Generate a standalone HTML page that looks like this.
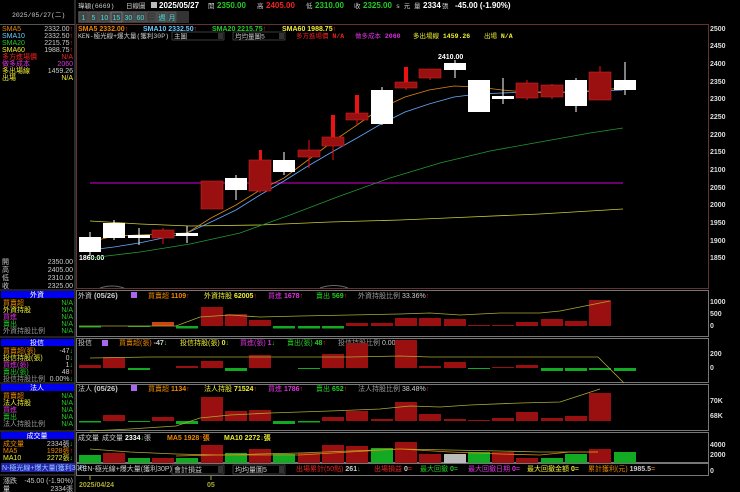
<!DOCTYPE html>
<html><head><meta charset="utf-8"><style>
html,body{margin:0;padding:0;background:#000;width:740px;height:492px;overflow:hidden}
svg{display:block}
text{font-family:"Liberation Sans","Noto Sans CJK TC",sans-serif;font-size:7px}
.b{font-weight:bold}
.m{font-family:"Liberation Mono","Noto Sans CJK TC",monospace;font-size:6.5px}
</style></head><body>
<svg width="740" height="492" viewBox="0 0 740 492" xmlns="http://www.w3.org/2000/svg">
<rect width="740" height="492" fill="#000"/>
<!-- header -->
<text x="12" y="17" fill="#ccc" class="m">2025/05/27(二)</text>
<line x1="75" y1="0" x2="75" y2="492" stroke="#555" stroke-width="1"/>
<line x1="0" y1="24.5" x2="75" y2="24.5" stroke="#555"/>
<text x="78" y="8" fill="#ccc" class="m">瑋穎(6669)</text>
<text x="126" y="8" fill="#ccc" class="m">日線圖</text>
<rect x="151" y="2" width="6" height="6" fill="#bbb"/>
<text x="159" y="8" fill="#fff" class="b" style="font-size:8px">2025/05/27</text>
<text x="208" y="8" fill="#ccc" class="m">開</text>
<text x="217" y="8" fill="#2c2" class="b" style="font-size:8px">2350.00</text>
<text x="257" y="8" fill="#ccc" class="m">高</text>
<text x="266" y="8" fill="#e22" class="b" style="font-size:8px">2405.00</text>
<text x="306" y="8" fill="#ccc" class="m">低</text>
<text x="315" y="8" fill="#2c2" class="b" style="font-size:8px">2310.00</text>
<text x="354" y="8" fill="#ccc" class="m">收</text>
<text x="363" y="8" fill="#2c2" class="b" style="font-size:8px">2325.00</text>
<text x="396" y="8" fill="#ccc" class="m">s 元</text>
<text x="414" y="8" fill="#ccc" class="m">量</text>
<text x="423" y="8" fill="#fff" class="b" style="font-size:8px">2334</text>
<text x="442" y="8" fill="#ccc" class="m">張</text>
<text x="455" y="8" fill="#fff" class="b" style="font-size:8px">-45.00 (-1.90%)</text>
<!-- buttons -->
<rect x="78" y="11" width="111" height="12" fill="#333"/>
<g fill="#444" stroke="#666" stroke-width="0.5">
<rect x="79" y="12" width="9" height="10"/><rect x="89" y="12" width="9" height="10"/><rect x="99" y="12" width="11" height="10"/><rect x="111" y="12" width="11" height="10" stroke="#aaa"/><rect x="123" y="12" width="11" height="10"/><rect x="135" y="12" width="11" height="10"/><rect x="147" y="12" width="9" height="10" fill="#3a3a3a"/><rect x="157" y="12" width="9" height="10"/><rect x="167" y="12" width="9" height="10"/>
</g>
<g fill="#4dd" class="m"><text x="81.5" y="20">1</text><text x="91.5" y="20">5</text><text x="100.5" y="20">10</text><text x="112.5" y="20">15</text><text x="124.5" y="20">30</text><text x="136.5" y="20">60</text><text x="148.5" y="20" fill="#555">日</text><text x="158.5" y="20">週</text><text x="168.5" y="20">月</text></g>
<!-- sidebar top -->
<g class="m">
<text x="2" y="31" fill="#e80">SMA5</text><text x="73" y="31" fill="#ccc" text-anchor="end">2332.00<tspan fill="#e22">↑</tspan></text>
<text x="2" y="38" fill="#6cf">SMA10</text><text x="73" y="38" fill="#ccc" text-anchor="end">2332.50<tspan fill="#e22">↑</tspan></text>
<text x="2" y="45" fill="#2c2">SMA20</text><text x="73" y="45" fill="#ccc" text-anchor="end">2215.75<tspan fill="#e22">↑</tspan></text>
<text x="2" y="52" fill="#ee3">SMA60</text><text x="73" y="52" fill="#ccc" text-anchor="end">1988.75<tspan fill="#e22">↑</tspan></text>
<text x="2" y="59" fill="#e22">多方進場價</text><text x="73" y="59" fill="#e22" text-anchor="end">N/A</text>
<text x="2" y="66" fill="#d3d">做多成本</text><text x="73" y="66" fill="#d3d" text-anchor="end">2060</text>
<text x="2" y="73" fill="#ee3">多出場線</text><text x="73" y="73" fill="#ccc" text-anchor="end">1459.26</text>
<text x="2" y="80" fill="#ee3">出場</text><text x="73" y="80" fill="#ee3" text-anchor="end">N/A</text>
<text x="2" y="264" fill="#ccc">開</text><text x="73" y="264" fill="#ccc" text-anchor="end">2350.00</text>
<text x="2" y="272" fill="#ccc">高</text><text x="73" y="272" fill="#ccc" text-anchor="end">2405.00</text>
<text x="2" y="280" fill="#ccc">低</text><text x="73" y="280" fill="#ccc" text-anchor="end">2310.00</text>
<text x="2" y="288" fill="#ccc">收</text><text x="73" y="288" fill="#ccc" text-anchor="end">2325.00</text>
</g>
<!-- sidebar sections -->
<g class="m">
<rect x="1" y="291" width="73" height="7" fill="#00e"/><text x="37" y="297" fill="#fff" text-anchor="middle">外資</text>
<text x="3" y="305" fill="#e80">買賣超</text><text x="73" y="305" fill="#2c2" text-anchor="end">N/A</text>
<text x="3" y="312" fill="#ee3">外資持股</text><text x="73" y="312" fill="#2c2" text-anchor="end">N/A</text>
<text x="3" y="319" fill="#d3d">買進</text><text x="73" y="319" fill="#2c2" text-anchor="end">N/A</text>
<text x="3" y="326" fill="#2c2">賣出</text><text x="73" y="326" fill="#2c2" text-anchor="end">N/A</text>
<text x="3" y="333" fill="#999">外資持股比例</text><text x="73" y="333" fill="#2c2" text-anchor="end">N/A</text>
<rect x="1" y="339" width="73" height="7" fill="#00e"/><text x="37" y="345" fill="#fff" text-anchor="middle">投信</text>
<text x="3" y="353" fill="#e80">買賣超(張)</text><text x="73" y="353" fill="#ccc" text-anchor="end">-47<tspan fill="#2c2">↓</tspan></text>
<text x="3" y="360" fill="#ee3">投信持股(張)</text><text x="73" y="360" fill="#ccc" text-anchor="end">0<tspan fill="#2c2">↓</tspan></text>
<text x="3" y="367" fill="#d3d">買進(張)</text><text x="73" y="367" fill="#ccc" text-anchor="end">1<tspan fill="#2c2">↓</tspan></text>
<text x="3" y="374" fill="#2c2">賣出(張)</text><text x="73" y="374" fill="#ccc" text-anchor="end">48<tspan fill="#e22">↑</tspan></text>
<text x="3" y="381" fill="#999">投信持股比例</text><text x="73" y="381" fill="#ccc" text-anchor="end">0.00%<tspan fill="#2c2">↓</tspan></text>
<rect x="1" y="384" width="73" height="7" fill="#00e"/><text x="37" y="390" fill="#fff" text-anchor="middle">法人</text>
<text x="3" y="398" fill="#e80">買賣超</text><text x="73" y="398" fill="#2c2" text-anchor="end">N/A</text>
<text x="3" y="405" fill="#ee3">法人持股</text><text x="73" y="405" fill="#2c2" text-anchor="end">N/A</text>
<text x="3" y="412" fill="#d3d">買進</text><text x="73" y="412" fill="#2c2" text-anchor="end">N/A</text>
<text x="3" y="419" fill="#2c2">賣出</text><text x="73" y="419" fill="#2c2" text-anchor="end">N/A</text>
<text x="3" y="426" fill="#999">法人持股比例</text><text x="73" y="426" fill="#2c2" text-anchor="end">N/A</text>
<rect x="1" y="432" width="73" height="7" fill="#00e"/><text x="37" y="438" fill="#fff" text-anchor="middle">成交量</text>
<text x="3" y="446" fill="#e80">成交量</text><text x="73" y="446" fill="#ccc" text-anchor="end">2334張<tspan fill="#2c2">↓</tspan></text>
<text x="3" y="453" fill="#e80">MA5</text><text x="73" y="453" fill="#e80" text-anchor="end">1928張<tspan fill="#e22">↑</tspan></text>
<text x="3" y="460" fill="#ee3">MA10</text><text x="73" y="460" fill="#ee3" text-anchor="end">2272張<tspan fill="#2c2">↓</tspan></text>
<rect x="1" y="463" width="74" height="9" fill="#22a"/><text x="2" y="470" fill="#9cf">N-極光線+爆大量(獲利30P)</text>
<text x="3" y="483" fill="#ccc">漲跌</text><text x="73" y="483" fill="#ccc" text-anchor="end">-45.00 (-1.90%)</text>
<text x="3" y="491" fill="#ccc">量</text><text x="73" y="491" fill="#ccc" text-anchor="end">2334張</text>
</g>
<g stroke="#444"><line x1="0" y1="290" x2="75" y2="290"/><line x1="0" y1="337" x2="75" y2="337"/><line x1="0" y1="383" x2="75" y2="383"/><line x1="0" y1="431" x2="75" y2="431"/><line x1="0" y1="475" x2="75" y2="475"/></g>

<!-- main chart frame -->
<rect x="76.5" y="24.5" width="632" height="264" fill="none" stroke="#633"/>
<g class="b">
<text x="78" y="31" fill="#e80">SMA5 2332.00<tspan fill="#e22">↑</tspan></text>
<text x="143" y="31" fill="#6cf">SMA10 2332.50<tspan fill="#e22">↑</tspan></text>
<text x="212" y="31" fill="#2c2">SMA20 2215.75<tspan fill="#e22">↑</tspan></text>
<text x="282" y="31" fill="#ee3">SMA60 1988.75<tspan fill="#e22">↑</tspan></text>
</g>
<text x="78" y="38" fill="#ccc" class="m">KEN-極光線+爆大量(獲利30P)</text>
<rect x="172" y="32" width="52" height="8" fill="#000" stroke="#777" stroke-width="0.5"/><text x="174" y="38.5" fill="#ccc" class="m">主圖</text><rect x="218" y="33" width="5" height="6" fill="#333"/>
<rect x="233" y="32" width="52" height="8" fill="#000" stroke="#777" stroke-width="0.5"/><text x="235" y="38.5" fill="#ccc" class="m">均均量圖5</text><rect x="279" y="33" width="5" height="6" fill="#333"/>
<text x="296" y="38" fill="#e22" class="m">多方進場價 <tspan class="b">N/A</tspan></text>
<text x="355" y="38" fill="#d3d" class="m">做多成本 <tspan class="b">2060</tspan></text>
<text x="413" y="38" fill="#ee3" class="m">多出場線 <tspan class="b">1459.26</tspan></text>
<text x="484" y="38" fill="#ee3" class="m">出場 <tspan class="b">N/A</tspan></text>
<!-- price axis -->
<g fill="#ddd" class="b" style="font-size:7px">
<text x="710" y="31">2500</text><text x="710" y="48">2450</text><text x="710" y="66">2400</text><text x="710" y="84">2350</text><text x="710" y="101">2300</text><text x="710" y="119">2250</text><text x="710" y="137">2200</text><text x="710" y="154">2150</text><text x="710" y="172">2100</text><text x="710" y="190">2050</text><text x="710" y="207">2000</text><text x="710" y="225">1950</text><text x="710" y="243">1900</text><text x="710" y="260">1850</text>
</g>
<text x="438" y="59" fill="#fff" class="b">2410.00</text>
<text x="79" y="260" fill="#fff" class="b">1860.00</text>
<!-- purple line -->
<line x1="90" y1="183" x2="623" y2="183" stroke="#a0a" stroke-width="1.2"/>
<!-- MAs -->
<polyline fill="none" stroke="#cc3" stroke-width="0.8" points="90,221 140,224 190,226 260,225 330,222 400,220 470,217 540,214 623,209"/>
<polyline fill="none" stroke="#293" stroke-width="0.8" points="90,258 140,252 190,244 240,233 290,215 340,196 390,178 440,163 490,151 540,142 590,133 623,128"/>
<polyline fill="none" stroke="#6af" stroke-width="0.8" points="90,250 114,247 139,243 163,238 187,233 211,222 236,210 260,195 284,181 308,166 332,152 357,138 381,124 405,112 429,104 454,97 478,94 502,93 526,92 550,92 574,92 599,91 623,90"/>
<polyline fill="none" stroke="#d81" stroke-width="0.8" points="90,242 114,236 139,235 163,234 187,233 211,218 236,205 260,190 284,178 308,160 332,142 357,125 381,108 405,97 429,90 454,86 478,87 502,90 526,92 550,93 574,92 599,90 623,88"/>
<!-- candles -->
<g stroke-width="1">
<!-- wicks -->
<g stroke="#fff">
<line x1="90" y1="232" x2="90" y2="256"/><line x1="114" y1="220" x2="114" y2="240"/><line x1="139" y1="228" x2="139" y2="245"/><line x1="187" y1="226" x2="187" y2="243"/><line x1="236" y1="175" x2="236" y2="200"/><line x1="284" y1="152" x2="284" y2="175"/><line x1="382" y1="87" x2="382" y2="125"/><line x1="455" y1="60" x2="455" y2="78"/><line x1="503" y1="78" x2="503" y2="104"/><line x1="576" y1="78" x2="576" y2="112"/><line x1="625" y1="62" x2="625" y2="95"/>
</g>
<g stroke="#e11">
<line x1="163" y1="228" x2="163" y2="244"/><line x1="212" y1="181" x2="212" y2="209"/><line x1="260" y1="150" x2="260" y2="193"/><line x1="309" y1="140" x2="309" y2="168"/><line x1="333" y1="115" x2="333" y2="160"/><line x1="357" y1="95" x2="357" y2="125"/><line x1="406" y1="67" x2="406" y2="90"/><line x1="430" y1="69" x2="430" y2="80"/><line x1="527" y1="80" x2="527" y2="100"/><line x1="552" y1="84" x2="552" y2="99"/><line x1="600" y1="66" x2="600" y2="100"/>
</g>
</g>
<g fill="#fff">
<rect x="79" y="237" width="22" height="15"/><rect x="103" y="223" width="22" height="15"/><rect x="128" y="235" width="22" height="3"/><rect x="176" y="233" width="22" height="3"/><rect x="225" y="178" width="22" height="12"/><rect x="273" y="160" width="22" height="12"/><rect x="371" y="90" width="22" height="34"/><rect x="444" y="63" width="22" height="7"/><rect x="468" y="80" width="22" height="32"/><rect x="492" y="96" width="22" height="3"/><rect x="565" y="80" width="22" height="26"/><rect x="614" y="80" width="22" height="10"/>
</g>
<g fill="#9a1010" stroke="#c22" stroke-width="0.6">
<rect x="152" y="230" width="22" height="8"/><rect x="201" y="181" width="22" height="28"/><rect x="249" y="160" width="22" height="31"/><rect x="298" y="150" width="22" height="7"/><rect x="322" y="137" width="22" height="9"/><rect x="346" y="113" width="22" height="7"/><rect x="395" y="82" width="22" height="6"/><rect x="419" y="69" width="22" height="9"/><rect x="516" y="83" width="22" height="15"/><rect x="541" y="85" width="22" height="12"/><rect x="589" y="72" width="22" height="28"/>
</g>
<g fill="#e11"><rect x="331" y="115" width="4" height="22"/><rect x="259" y="150" width="3" height="10"/><rect x="355" y="95" width="4" height="18"/><rect x="404" y="67" width="4" height="15"/></g>
<!-- small bottom bumps -->
<path d="M100,288 q12,-4 24,0 M320,288 q14,-5 28,0" stroke="#666" fill="none"/>

<!-- sub panels frames -->
<g fill="none" stroke="#777">
<rect x="76.5" y="290.5" width="632" height="46"/>
<rect x="76.5" y="338.5" width="632" height="44"/>
<rect x="76.5" y="384.5" width="632" height="46"/>
<rect x="76.5" y="432.5" width="632" height="30"/>
<rect x="76.5" y="463.5" width="632" height="12"/>
</g>
<!-- panel 1 -->
<g class="m">
<text x="78" y="298" fill="#ccc">外資 <tspan class="b" style="font-size:7.5px">(05/26)</tspan></text>
<rect x="131" y="292" width="6" height="6" fill="#a6e"/>
<text x="148" y="298" fill="#e80">買賣超 <tspan class="b">1109</tspan><tspan fill="#e22">↑</tspan></text>
<text x="204" y="298" fill="#ee3">外資持股 <tspan class="b">62005</tspan><tspan fill="#e22">↑</tspan></text>
<text x="268" y="298" fill="#d3d">買進 <tspan class="b">1678</tspan><tspan fill="#e22">↑</tspan></text>
<text x="316" y="298" fill="#2c2">賣出 <tspan class="b">569</tspan><tspan fill="#e22">↑</tspan></text>
<text x="358" y="298" fill="#999">外資持股比例 <tspan fill="#ccc">33.36%</tspan><tspan fill="#e22">↑</tspan></text>
</g>
<g fill="#9a1010">
<rect x="152" y="322" width="22" height="4" fill="#c41"/><rect x="201" y="307" width="22" height="19"/><rect x="225" y="314" width="22" height="12"/><rect x="249" y="320" width="22" height="6"/><rect x="346" y="323" width="22" height="3"/><rect x="371" y="323" width="22" height="3"/><rect x="395" y="318" width="22" height="8"/><rect x="419" y="318" width="22" height="8"/><rect x="444" y="319" width="22" height="7"/><rect x="468" y="325" width="22" height="1"/><rect x="492" y="325" width="22" height="1"/><rect x="516" y="322" width="22" height="4"/><rect x="541" y="319" width="22" height="7"/><rect x="565" y="321" width="22" height="5"/><rect x="589" y="300" width="22" height="26"/>
</g>
<g fill="#1a2"><rect x="79" y="326" width="22" height="1.5"/><rect x="176" y="326" width="22" height="2.5"/><rect x="273" y="326" width="22" height="2.5"/><rect x="298" y="326" width="22" height="2.5"/><rect x="322" y="326" width="22" height="2.5"/><rect x="128" y="326" width="22" height="1"/></g>
<polyline fill="none" stroke="#aa3" stroke-width="0.8" points="79,326 150,326 176,326 200,317 230,315 260,317 300,316 350,315 400,314 430,313 460,315 500,313 540,313 560,311 590,305 610,301"/>
<g fill="#ddd" class="b"><text x="710" y="304">1000</text><text x="710" y="316">500</text><text x="710" y="328">0</text></g>
<!-- panel 2 -->
<g class="m">
<text x="78" y="345" fill="#ccc">投信</text>
<rect x="102" y="340" width="6" height="6" fill="#a6e"/>
<text x="119" y="345" fill="#e80">買賣超(張) <tspan class="b" fill="#ccc">-47</tspan><tspan fill="#2c2">↓</tspan></text>
<text x="180" y="345" fill="#ee3">投信持股(張) <tspan class="b">0</tspan><tspan fill="#2c2">↓</tspan></text>
<text x="240" y="345" fill="#d3d">買進(張) <tspan class="b">1</tspan><tspan fill="#2c2">↓</tspan></text>
<text x="287" y="345" fill="#2c2">賣出(張) <tspan class="b">48</tspan><tspan fill="#e22">↑</tspan></text>
<text x="338" y="345" fill="#999">投信持股比例 <tspan fill="#ccc">0.00%</tspan><tspan fill="#2c2">↓</tspan></text>
</g>
<g fill="#9a1010">
<rect x="79" y="365" width="22" height="3"/><rect x="103" y="357" width="22" height="11"/><rect x="176" y="366" width="22" height="2"/><rect x="201" y="361" width="22" height="7"/><rect x="249" y="355" width="22" height="13"/><rect x="322" y="354" width="22" height="14"/><rect x="346" y="343" width="22" height="25"/><rect x="395" y="340" width="22" height="28"/><rect x="419" y="366" width="22" height="2"/><rect x="444" y="362" width="22" height="6"/><rect x="492" y="367" width="22" height="1"/><rect x="516" y="365" width="22" height="3"/>
</g>
<g fill="#1a2"><rect x="128" y="368" width="22" height="2"/><rect x="225" y="368" width="22" height="3"/><rect x="298" y="368" width="22" height="1"/><rect x="541" y="368" width="22" height="3"/><rect x="565" y="368" width="22" height="3"/><rect x="589" y="368" width="22" height="2"/><rect x="614" y="368" width="22" height="3"/><rect x="468" y="368" width="22" height="1"/></g>
<polyline fill="none" stroke="#aa3" stroke-width="0.8" points="90,358 150,357 250,357 350,357 400,356 430,357 560,357 598,357 624,383"/>
<g fill="#ddd" class="b"><text x="710" y="356">200</text><text x="710" y="370">0</text></g>
<!-- panel 3 -->
<g class="m">
<text x="78" y="391" fill="#ccc">法人 <tspan class="b" style="font-size:7.5px">(05/26)</tspan></text>
<rect x="131" y="385" width="6" height="6" fill="#a6e"/>
<text x="148" y="391" fill="#e80">買賣超 <tspan class="b">1134</tspan><tspan fill="#e22">↑</tspan></text>
<text x="204" y="391" fill="#ee3">法人持股 <tspan class="b">71524</tspan><tspan fill="#e22">↑</tspan></text>
<text x="268" y="391" fill="#d3d">買進 <tspan class="b">1786</tspan><tspan fill="#e22">↑</tspan></text>
<text x="316" y="391" fill="#2c2">賣出 <tspan class="b">652</tspan><tspan fill="#e22">↑</tspan></text>
<text x="358" y="391" fill="#999">法人持股比例 <tspan fill="#ccc">38.48%</tspan><tspan fill="#e22">↑</tspan></text>
</g>
<g fill="#9a1010">
<rect x="103" y="415" width="22" height="6"/><rect x="152" y="417" width="22" height="4"/><rect x="201" y="397" width="22" height="24"/><rect x="225" y="411" width="22" height="10"/><rect x="249" y="410" width="22" height="11"/><rect x="322" y="417" width="22" height="4"/><rect x="346" y="411" width="22" height="10"/><rect x="371" y="419" width="22" height="2"/><rect x="395" y="402" width="22" height="19"/><rect x="419" y="414" width="22" height="7"/><rect x="444" y="419" width="22" height="2"/><rect x="468" y="420" width="22" height="1"/><rect x="492" y="418" width="22" height="3"/><rect x="516" y="412" width="22" height="9"/><rect x="541" y="418" width="22" height="3"/><rect x="565" y="416" width="22" height="5"/><rect x="589" y="393" width="22" height="28"/>
</g>
<g fill="#1a2"><rect x="79" y="421" width="22" height="1.5"/><rect x="128" y="421" width="22" height="1"/><rect x="176" y="421" width="22" height="3"/><rect x="273" y="421" width="22" height="3"/><rect x="298" y="421" width="22" height="1.5"/></g>
<polyline fill="none" stroke="#aa3" stroke-width="0.8" points="90,431 130,429 176,426 200,418 230,415 270,413 330,411 380,409 410,406 440,407 470,405 520,403 560,402 600,389"/>
<g fill="#ddd" class="b"><text x="710" y="403">70K</text><text x="710" y="418">68K</text></g>
<!-- volume -->
<g class="m">
<text x="78" y="440" fill="#ccc">成交量</text>
<text x="102" y="440" fill="#ccc">成交量 <tspan class="b" fill="#fff">2334</tspan><tspan fill="#2c2">↓</tspan>張</text>
<text x="167" y="440" fill="#e80" class="b">MA5 1928<tspan fill="#e22">↑</tspan>張</text>
<text x="224" y="440" fill="#ee3" class="b">MA10 2272<tspan fill="#2c2">↓</tspan>張</text>
</g>
<g fill="#9a1010">
<rect x="103" y="453" width="22" height="10"/><rect x="152" y="458" width="22" height="5"/><rect x="201" y="445" width="22" height="18"/><rect x="249" y="449" width="22" height="14"/><rect x="298" y="453" width="22" height="10"/><rect x="322" y="445" width="22" height="18"/><rect x="346" y="446" width="22" height="17"/><rect x="395" y="442" width="22" height="21"/><rect x="419" y="454" width="22" height="9"/><rect x="492" y="452" width="22" height="11"/><rect x="516" y="458" width="22" height="5"/><rect x="589" y="449" width="22" height="14"/>
</g>
<g fill="#1a2"><rect x="79" y="455" width="22" height="8"/><rect x="128" y="458" width="22" height="5"/><rect x="176" y="458" width="22" height="5"/><rect x="225" y="453" width="22" height="10"/><rect x="273" y="454" width="22" height="9"/><rect x="371" y="448" width="22" height="15"/><rect x="468" y="452" width="22" height="11"/><rect x="541" y="458" width="22" height="5"/><rect x="565" y="454" width="22" height="9"/><rect x="614" y="452" width="22" height="11"/></g>
<rect x="444" y="454" width="22" height="9" fill="#bbb"/>
<polyline fill="none" stroke="#aa3" stroke-width="0.8" points="90,449 130,452 176,454 220,455 300,453 350,451 400,449 450,450 500,451 540,452 570,452 598,452"/>
<polyline fill="none" stroke="#d81" stroke-width="0.8" points="176,456 220,455 300,455 350,452 400,449 450,452 500,454 540,455 570,452 598,452"/>
<g fill="#ddd" class="b"><text x="710" y="447">4000</text><text x="710" y="457">2000</text><text x="710" y="473">0</text></g>
<!-- bottom bar -->
<g class="m">
<text x="78" y="471" fill="#ccc">KEN-極光線+爆大量(獲利30P)</text>
<rect x="172" y="465" width="52" height="9" fill="#000" stroke="#777" stroke-width="0.5"/><text x="174" y="472" fill="#ccc">會計損益</text><rect x="218" y="466" width="5" height="7" fill="#333"/>
<rect x="233" y="465" width="52" height="9" fill="#000" stroke="#777" stroke-width="0.5"/><text x="235" y="472" fill="#ccc">均均量圖5</text><rect x="279" y="466" width="5" height="7" fill="#333"/>
<text x="296" y="471" fill="#e22">出場累計(50點) <tspan class="b" fill="#ccc">261</tspan><tspan fill="#2c2">↓</tspan></text>
<text x="374" y="471" fill="#e22">出場損益 <tspan class="b" fill="#ccc">0</tspan>=</text>
<text x="420" y="471" fill="#2c2">最大回撤 <tspan class="b">0</tspan>=</text>
<text x="468" y="471" fill="#d3d">最大回撤日期 <tspan class="b">0</tspan>=</text>
<text x="527" y="471" fill="#ee3">最大回撤金額 <tspan class="b">0</tspan>=</text>
<text x="588" y="471" fill="#e80">累計獲利(元) <tspan class="b" fill="#ccc">1985.5</tspan>=</text>
</g>
<!-- date axis -->
<line x1="90" y1="476" x2="90" y2="480" stroke="#aa3"/><line x1="211" y1="476" x2="211" y2="480" stroke="#aa3"/>
<text x="79" y="487" fill="#aa3" class="b">2025/04/24</text>
<text x="207" y="487" fill="#aa3" class="b">05</text>
</svg>
</body></html>
